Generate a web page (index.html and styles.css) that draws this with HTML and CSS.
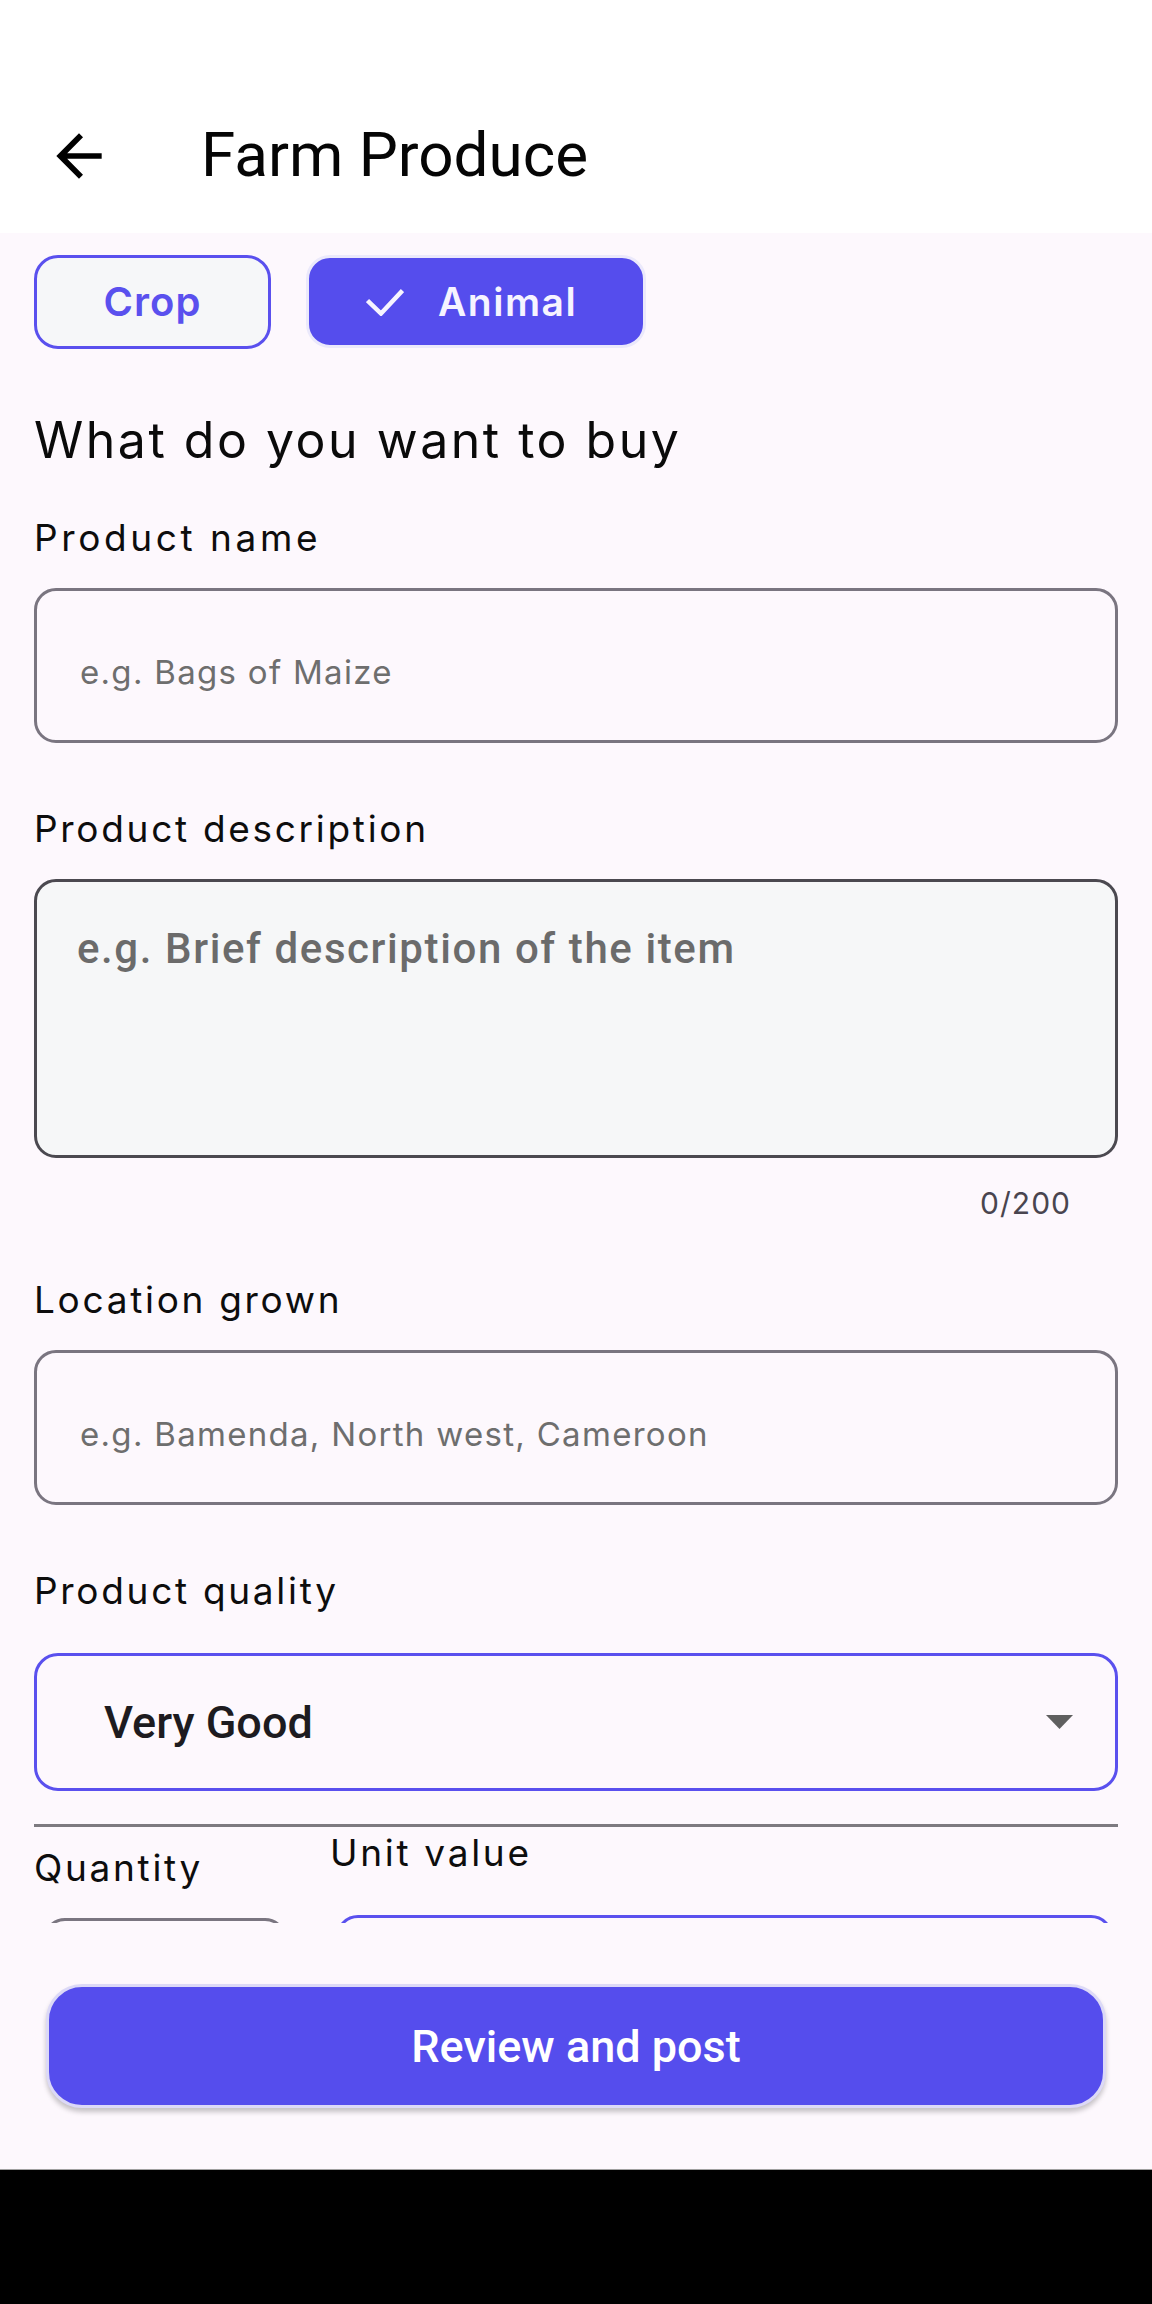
FILE: index.html
```html
<!DOCTYPE html>
<html lang="en">
<head>
<meta charset="utf-8">
<title>Farm Produce</title>
<link rel="stylesheet" href="styles.css">
</head>
<body>
<div class="screen">
  <header class="appbar">
    <svg class="back" viewBox="0 0 24 24" aria-hidden="true"><path d="M20 11H7.83l5.59-5.59L12 4l-8 8 8 8 1.41-1.41L7.83 13H20v-2z" fill="#000"/></svg>
    <h1 class="title">Farm Produce</h1>
  </header>

  <main class="content">
    <div class="chips">
      <button class="chip chip-outline">Crop</button>
      <button class="chip chip-selected">
        <svg class="check" viewBox="0 0 38 28" aria-hidden="true"><polyline points="1.5,12.5 15,25.5 36.5,2.5" fill="none" stroke="#f6f4ff" stroke-width="4.5"/></svg>
        <span class="chip-text">Animal</span>
      </button>
    </div>

    <h2 class="heading">What do you want to buy</h2>

    <label class="label label-first label-wide">Product name</label>
    <input class="field" type="text" placeholder="e.g. Bags of Maize">

    <label class="label">Product description</label>
    <textarea class="area" placeholder="e.g. Brief description of the item"></textarea>
    <div class="counter">0/200</div>

    <label class="label label-after-counter">Location grown</label>
    <input class="field" type="text" placeholder="e.g. Bamenda, North west, Cameroon">

    <label class="label label-select">Product quality</label>
    <div class="select">
      <span class="select-value">Very Good</span>
      <svg class="caret" viewBox="0 0 27 14" aria-hidden="true"><polygon points="0,0 27,0 13.5,14" fill="#5f5f5f"/></svg>
    </div>

    <div class="divider"></div>

    <div class="split">
      <div class="qty">
        <label class="label label-flat">Quantity</label>
        <div class="stub stub-grey"></div>
      </div>
      <div class="unit">
        <label class="label label-flat">Unit value</label>
        <div class="stub stub-accent"></div>
      </div>
    </div>
  </main>

  <footer class="actions">
    <button class="primary">Review and post</button>
  </footer>

  <div class="navbar"></div>
</div>
</body>
</html>
```

FILE: styles.css
```css
* {
  box-sizing: border-box;
  margin: 0;
  padding: 0;
}

html, body {
  width: 1152px;
  height: 2304px;
}

body {
  background: #fdf8fd;
  font-family: "Inter", "Noto Sans", sans-serif;
  color: #0d0d0d;
  overflow: hidden;
}

.screen {
  display: flex;
  flex-direction: column;
  height: 2304px;
}

/* App bar */
.appbar {
  flex: none;
  height: 233px;
  background: #ffffff;
  display: flex;
  align-items: center;
  padding-top: 78px;
  padding-left: 45px;
}

.back {
  flex: none;
  width: 68px;
  height: 68px;
}

.title {
  margin-left: 88px;
  font-family: Roboto, sans-serif;
  font-weight: 400;
  font-size: 62px;
  line-height: 1.172;
  color: #050505;
}

/* Scrollable form */
.content {
  flex: none;
  height: 1690px;
  overflow: hidden;
  padding: 0 34px;
  display: flex;
  flex-direction: column;
}

.content > * {
  flex-shrink: 0;
}

.chips {
  display: flex;
  align-items: flex-start;
  gap: 35px;
  margin-top: 22px;
}

.chip {
  display: inline-flex;
  align-items: center;
  height: 94px;
  border-radius: 24px;
  font-family: "Inter", sans-serif;
  font-weight: 600;
  font-size: 39px;
  line-height: 1;
}

.chip-outline {
  width: 237px;
  justify-content: center;
  border: 3px solid #5a50ee;
  background: #f6f7f9;
  color: #5a50ee;
  font-size: 40px;
  letter-spacing: 1px;
}

.chip-selected {
  width: 340px;
  height: 93px;
  padding-left: 57px;
  border: 3px solid #ebe9fb;
  background: #554ded;
  color: #f6f4ff;
}

.check {
  width: 38px;
  height: 28px;
  margin-right: 34px;
}

.chip-text {
  letter-spacing: 1.5px;
}

.heading {
  margin-top: 61px;
  font-weight: 400;
  font-size: 50px;
  line-height: 60px;
  letter-spacing: 2.5px;
  color: #0a0a0a;
}

.label {
  display: block;
  margin-top: 64px;
  margin-bottom: 28px;
  font-weight: 400;
  font-size: 37px;
  line-height: 44px;
  letter-spacing: 2.7px;
  color: #0d0d0d;
}

.label-wide {
  letter-spacing: 3.6px;
}

.label-first {
  margin-top: 46px;
}

.label-after-counter {
  margin-top: 57px;
}

.label-select {
  margin-bottom: 40px;
}

.field {
  width: 100%;
  height: 155px;
  border: 3px solid #7a7580;
  border-radius: 22px;
  background: transparent;
  padding: 12px 20px 0 43px;
  font-family: "Inter", sans-serif;
  font-size: 33px;
  letter-spacing: 1.3px;
  color: #1d1b20;
  outline: none;
}

.field::placeholder {
  color: #6e6e6e;
}

.area {
  width: 100%;
  height: 279px;
  border: 3px solid #4b4950;
  border-radius: 22px;
  background: #f6f7f8;
  padding: 42px 40px 0 40px;
  font-family: Roboto, sans-serif;
  font-weight: 500;
  font-size: 42px;
  line-height: 50px;
  letter-spacing: 1.6px;
  color: #1d1b20;
  resize: none;
  outline: none;
}

.area::placeholder {
  color: #6b6b6b;
}

.counter {
  margin-top: 27px;
  padding-right: 47px;
  text-align: right;
  font-size: 30px;
  line-height: 36px;
  letter-spacing: 1px;
  color: #49454f;
}

.select {
  height: 138px;
  border: 3px solid #5a50ee;
  border-radius: 24px;
  display: flex;
  align-items: center;
  justify-content: space-between;
  padding: 0 42px 0 67px;
}

.select-value {
  font-family: Roboto, sans-serif;
  font-weight: 500;
  font-size: 45px;
  color: #1d1b20;
}

.caret {
  width: 27px;
  height: 14px;
}

.divider {
  margin-top: 33px;
  height: 3px;
  background: #7d7a80;
}

.split {
  display: flex;
  align-items: flex-start;
  margin-top: 4px;
}

.qty {
  width: 266px;
  flex: none;
  padding-top: 15px;
}

.unit {
  flex: 1;
  margin-left: 30px;
}

.label-flat {
  margin: 0;
}

.stub {
  height: 150px;
  border-radius: 22px;
  border: 3px solid #7a7580;
}

.stub-grey {
  margin: 28px 0 0 9px;
  width: 244px;
}

.stub-accent {
  margin: 40px 5px 0 6px;
  border-color: #5a50ee;
}

/* Bottom action */
.actions {
  flex: none;
  height: 246px;
  padding: 61px 46px 0;
}

.primary {
  width: 100%;
  height: 124px;
  border-radius: 36px;
  border: 3px solid #dcd9f7;
  background: #554ded;
  box-shadow: 0 4px 5px rgba(0, 0, 0, 0.22);
  color: #ffffff;
  font-family: Roboto, sans-serif;
  font-weight: 500;
  font-size: 45px;
}

.navbar {
  flex: none;
  height: 135px;
  background: #000;
  border-top: 1px solid #a0a0a0;
}
```
